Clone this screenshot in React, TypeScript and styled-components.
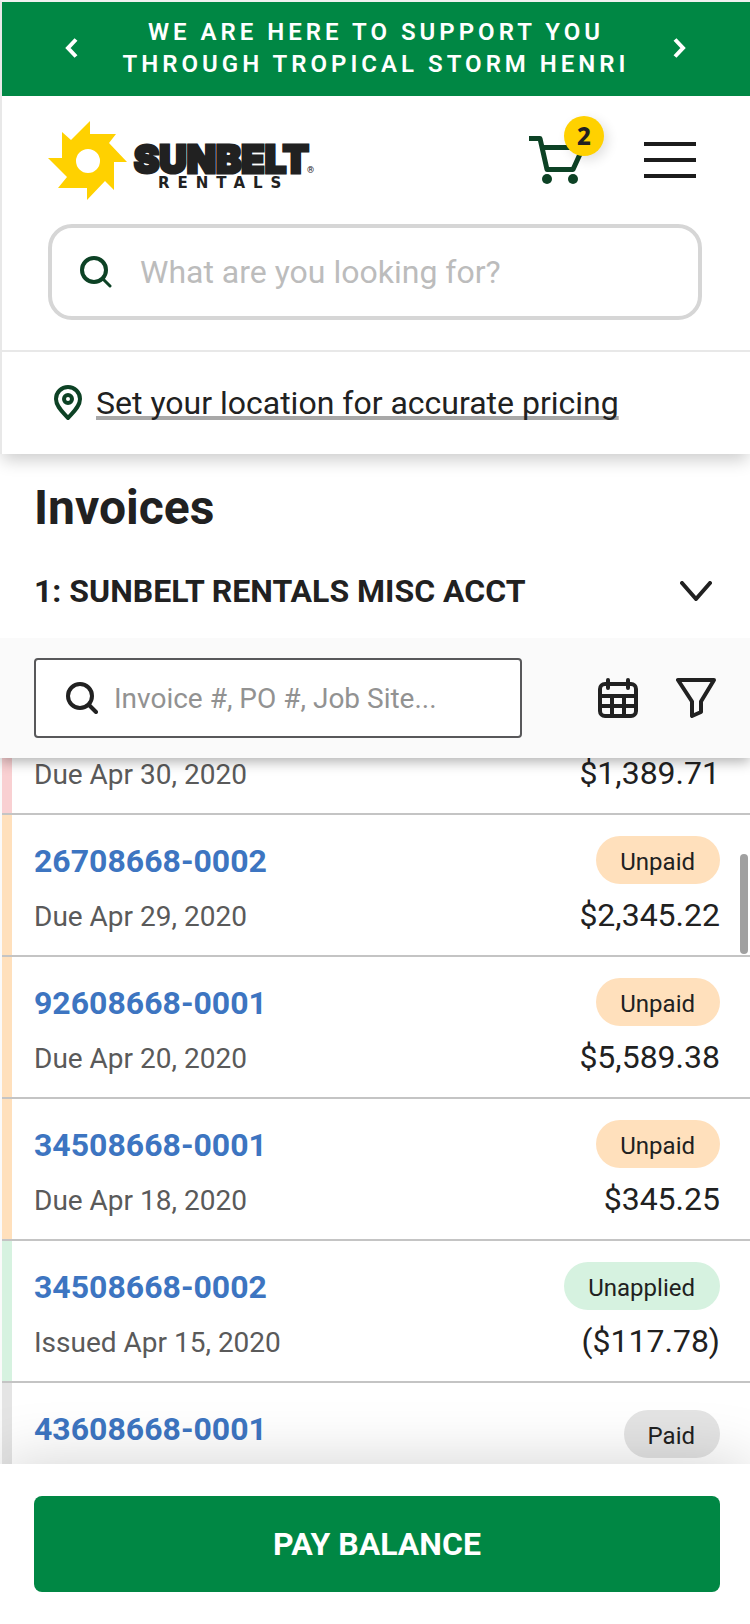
import React from "react";
import styled, { createGlobalStyle } from "styled-components";

const color = {
  green: "#008744",
  forest: "#0d4225",
  yellow: "#ffd100",
  ink: "#212121",
  muted: "#5a5a5a",
  link: "#3d75c1",
  rule: "#c4c4c4",
  edge: "#e8e8e8",
};

type Status = "overdue" | "unpaid" | "unapplied" | "paid";

const statusColor: Record<Status, string> = {
  overdue: "#f9d0d2",
  unpaid: "#ffe0bc",
  unapplied: "#d6f2e0",
  paid: "#e4e4e4",
};

interface Invoice {
  number?: string;
  label?: string;
  date?: string;
  amount?: string;
  status: Status;
}

const invoices: Invoice[] = [
  { date: "Due Apr 30, 2020", amount: "$1,389.71", status: "overdue" },
  { number: "26708668-0002", label: "Unpaid", date: "Due Apr 29, 2020", amount: "$2,345.22", status: "unpaid" },
  { number: "92608668-0001", label: "Unpaid", date: "Due Apr 20, 2020", amount: "$5,589.38", status: "unpaid" },
  { number: "34508668-0001", label: "Unpaid", date: "Due Apr 18, 2020", amount: "$345.25", status: "unpaid" },
  { number: "34508668-0002", label: "Unapplied", date: "Issued Apr 15, 2020", amount: "($117.78)", status: "unapplied" },
  { number: "43608668-0001", label: "Paid", status: "paid" },
];

const GlobalStyle = createGlobalStyle`
  * { box-sizing: border-box; }
  body {
    margin: 0;
    background: #ffffff;
    color: ${color.ink};
    font-family: Roboto, "Liberation Sans", sans-serif;
    font-size: 32px;
  }
  button, input, select {
    margin: 0;
    padding: 0;
    border: 0;
    background: none;
    color: inherit;
    font: inherit;
  }
  svg { display: block; }
`;

const Screen = styled.div`
  display: flex;
  flex-direction: column;
  height: 100vh;
  background: #ffffff;
`;

const Header = styled.header`
  position: relative;
  z-index: 2;
  flex: none;
  border-top: 2px solid #f0f0f0;
  border-left: 2px solid ${color.edge};
  background: #ffffff;
  box-shadow: 0 8px 16px -2px rgba(0, 0, 0, 0.2);
`;

const Banner = styled.div`
  display: flex;
  align-items: center;
  justify-content: space-between;
  padding: 14px 62px 16px;
  background: ${color.green};
  color: #ffffff;
`;

const BannerText = styled.p`
  margin: 0;
  font-size: 24px;
  font-weight: 600;
  line-height: 32px;
  letter-spacing: 4px;
  text-align: center;
`;

const IconButton = styled.button`
  display: block;
  flex: none;
  cursor: pointer;
`;

const BrandRow = styled.div`
  display: flex;
  align-items: center;
  height: 128px;
  padding: 0 54px 0 46px;
`;

const Brand = styled.a`
  display: flex;
  align-items: center;
  margin-right: auto;
  color: ${color.ink};
  text-decoration: none;
`;

const HeaderActions = styled.div`
  display: flex;
  align-items: center;
  gap: 56px;
`;

const CartButton = styled(IconButton)`
  position: relative;
  width: 60px;
  height: 48px;
`;

const CartCount = styled.span`
  position: absolute;
  top: -20px;
  right: -16px;
  width: 40px;
  height: 40px;
  border-radius: 50%;
  background: ${color.yellow};
  box-shadow: 4px 4px 12px rgba(0, 0, 0, 0.12);
  font-family: "Noto Sans", sans-serif;
  font-size: 24px;
  font-weight: 800;
  line-height: 40px;
  text-align: center;
`;

const SiteSearch = styled.label`
  display: flex;
  align-items: center;
  gap: 28px;
  height: 96px;
  margin: 0 48px 30px 46px;
  padding: 0 28px;
  border: 4px solid #d6d6d6;
  border-radius: 24px;
`;

const SearchInput = styled.input<{ $tone: string; $size: number }>`
  flex: 1;
  min-width: 0;
  outline: none;
  font-size: ${(p) => p.$size}px;
  &::placeholder {
    color: ${(p) => p.$tone};
    opacity: 1;
  }
`;

const LocationBar = styled.div`
  display: flex;
  align-items: center;
  gap: 14px;
  height: 104px;
  padding: 0 52px;
  border-top: 2px solid ${color.edge};
`;

const LocationLink = styled.a`
  color: inherit;
  line-height: 40px;
  text-decoration: underline 4px #a8a8a8;
  text-underline-offset: 2px;
  text-decoration-skip-ink: none;
`;

const Main = styled.main`
  display: flex;
  flex: 1;
  flex-direction: column;
  min-height: 0;
`;

const Heading = styled.section`
  flex: none;
  padding: 26px 30px 27px 34px;
`;

const Title = styled.h1`
  margin: 0 0 35px;
  font-size: 48px;
  font-weight: 700;
  line-height: 56px;
`;

const AccountPicker = styled.label`
  display: grid;
  grid-template-columns: 1fr 48px;
  align-items: center;
  line-height: 40px;
`;

const AccountSelect = styled.select`
  grid-row: 1;
  grid-column: 1 / 3;
  height: 40px;
  appearance: none;
  font-weight: 700;
`;

const PickerArrow = styled.span`
  grid-row: 1;
  grid-column: 2;
  justify-self: center;
  pointer-events: none;
`;

const FilterBar = styled.div`
  position: relative;
  z-index: 1;
  display: flex;
  flex: none;
  align-items: center;
  gap: 38px;
  padding: 20px 34px;
  background: #fafafa;
  box-shadow: 0 4px 12px rgba(0, 0, 0, 0.3);
  clip-path: inset(0 0 -24px 0);
`;

const InvoiceSearch = styled.label`
  display: flex;
  flex: 1;
  align-items: center;
  gap: 16px;
  height: 80px;
  margin-right: 38px;
  padding: 0 30px;
  border: 2px solid #58585a;
  border-radius: 4px;
  background: #ffffff;
`;

const ListArea = styled.div`
  position: relative;
  flex: 1;
  min-height: 0;
  overflow: hidden;
  border-left: 2px solid #fafafa;
`;

const List = styled.ul`
  height: 100%;
  margin: 0;
  padding: 0;
  overflow-y: auto;
  scrollbar-width: none;
  list-style: none;
`;

const Row = styled.li<{ $status: Status }>`
  display: flex;
  flex-direction: column;
  gap: 16px;
  padding: 0 30px 25px 32px;
  border-bottom: 2px solid ${color.rule};
  background: linear-gradient(${(p) => statusColor[p.$status]} 0 0) left / 10px 100% no-repeat;
`;

const RowTop = styled.div<{ $settled: boolean }>`
  display: flex;
  align-items: ${(p) => (p.$settled ? "flex-end" : "center")};
  justify-content: space-between;
  height: ${(p) => (p.$settled ? 75 : 69)}px;
  padding-top: 21px;
`;

const RowBottom = styled.div`
  display: flex;
  align-items: baseline;
  justify-content: space-between;
  height: 30px;
  line-height: 30px;
`;

const InvoiceLink = styled.a`
  align-self: flex-start;
  color: ${color.link};
  font-weight: 700;
  line-height: 50px;
  text-decoration: none;
`;

const Pill = styled.span<{ $status: Status }>`
  height: 48px;
  padding: 2px 25px 0 24px;
  border-radius: 24px;
  background: ${(p) => statusColor[p.$status]};
  font-size: 24px;
  line-height: 48px;
`;

const DateText = styled.span`
  color: ${color.muted};
  font-size: 28px;
`;

const Amount = styled.span`
  text-align: right;
`;

const ScrollThumb = styled.div`
  position: absolute;
  top: 96px;
  right: 2px;
  width: 8px;
  height: 100px;
  border-radius: 4px;
  background: #a0a0a0;
`;

const Footer = styled.footer`
  position: relative;
  z-index: 1;
  flex: none;
  padding: 32px 30px 32px 34px;
  background: #ffffff;
  box-shadow: 0 0 64px rgba(0, 0, 0, 0.18);
`;

const PayButton = styled.button`
  display: block;
  width: 100%;
  height: 96px;
  border-radius: 8px;
  background: ${color.green};
  color: #ffffff;
  font-weight: 700;
  cursor: pointer;
`;

const Chevron = ({ d }: { d: string }) => (
  <svg width="16" height="20" viewBox="0 0 16 20" fill="none" stroke="currentColor" strokeWidth="4">
    <path d={d} />
  </svg>
);

const SearchIcon = ({ stroke, tail }: { stroke: string; tail: number }) => (
  <svg width="32" height="32" viewBox="0 0 32 32" fill="none" stroke={stroke} strokeWidth="4" strokeLinecap="round">
    <circle cx="14" cy="14" r="12" />
    <path d="M23 23l7 7" strokeWidth={tail} />
  </svg>
);

const Logo = () => (
  <svg width="268" height="82" viewBox="0 0 268 82" role="img" aria-label="Sunbelt Rentals">
    <path
      fill={color.yellow}
      fillRule="evenodd"
      d="M42 2v13h26l-7 9 18 19H66v28l-9-9-18 19V69H10l9-11L0 39h14V13l9 8zM40 30a12 12 0 1 0 0 24 12 12 0 0 0 0-24z"
    />
    <g fill={color.ink}>
      <text x="86" y="54" fontFamily="Inter, sans-serif" fontWeight="900" fontSize="38" stroke={color.ink} strokeWidth="3">
        SUNBELT
      </text>
      <text x="110" y="69" fontFamily="DejaVu Sans, sans-serif" fontWeight="700" fontSize="15" letterSpacing="8">
        RENTALS
      </text>
      <text x="259" y="54" fontFamily="Roboto, sans-serif" fontSize="9">
        ®
      </text>
    </g>
  </svg>
);

const CartIcon = () => (
  <svg width="60" height="48" viewBox="0 0 60 48" fill="none" stroke={color.forest} strokeWidth="5">
    <path d="M1 2.500h11l7 31h26l10-22H14" strokeLinejoin="round" />
    <circle cx="19" cy="43" r="5" fill={color.forest} stroke="none" />
    <circle cx="45" cy="43" r="5" fill={color.forest} stroke="none" />
  </svg>
);

const MenuIcon = () => (
  <svg width="52" height="36" viewBox="0 0 52 36" fill="#1c1c1c">
    <path d="M0 0h52v4H0zM0 16h52v4H0zM0 32h52v4H0z" />
  </svg>
);

const PinIcon = () => (
  <svg width="28" height="36" viewBox="0 0 28 36" fill="none" stroke={color.forest} strokeWidth="4">
    <path d="M14 33C10 28 2 22 2 14a12 12 0 0 1 24 0c0 8-8 14-12 19z" strokeLinejoin="round" />
    <circle cx="14" cy="14" r="4" />
  </svg>
);

const CalendarIcon = () => (
  <svg width="40" height="40" viewBox="0 0 40 40" fill="none" stroke={color.ink} strokeWidth="4">
    <rect x="2" y="6" width="36" height="32" rx="5" />
    <path d="M2 18h36M2 28h36M14 18v20M26 18v20" />
    <path d="M10 2v8M30 2v8" strokeLinecap="round" />
  </svg>
);

const FunnelIcon = () => (
  <svg width="40" height="40" viewBox="0 0 40 40" fill="none" stroke={color.ink} strokeWidth="4" strokeLinejoin="round">
    <path d="M2 2h36L25 23.500V34l-9 4V23.500z" />
  </svg>
);

export default function App() {
  return (
    <Screen>
      <GlobalStyle />
      <Header>
        <Banner>
          <IconButton aria-label="Previous message">
            <Chevron d="M12 1.500L4 10l8 8.500" />
          </IconButton>
          <BannerText>
            WE ARE HERE TO SUPPORT YOU
            <br />
            THROUGH TROPICAL STORM HENRI
          </BannerText>
          <IconButton aria-label="Next message">
            <Chevron d="M3 1.500L11 10l-8 8.500" />
          </IconButton>
        </Banner>
        <BrandRow>
          <Brand href="#home">
            <Logo />
          </Brand>
          <HeaderActions>
            <CartButton aria-label="Cart, 2 items">
              <CartIcon />
              <CartCount>2</CartCount>
            </CartButton>
            <IconButton aria-label="Menu">
              <MenuIcon />
            </IconButton>
          </HeaderActions>
        </BrandRow>
        <SiteSearch>
          <SearchIcon stroke={color.forest} tail={3} />
          <SearchInput
            type="text"
            aria-label="Search the site"
            placeholder="What are you looking for?"
            $tone="#bcbcbc"
            $size={32}
          />
        </SiteSearch>
        <LocationBar>
          <PinIcon />
          <LocationLink href="#location">Set your location for accurate pricing</LocationLink>
        </LocationBar>
      </Header>
      <Main>
        <Heading>
          <Title>Invoices</Title>
          <AccountPicker>
            <AccountSelect aria-label="Account">
              <option>1: SUNBELT RENTALS MISC ACCT</option>
            </AccountSelect>
            <PickerArrow>
              <svg width="32" height="20" viewBox="0 0 32 20" fill="none" stroke={color.ink} strokeWidth="4" strokeLinecap="round" strokeLinejoin="round">
                <path d="M2 2l14 16L30 2" />
              </svg>
            </PickerArrow>
          </AccountPicker>
        </Heading>
        <FilterBar>
          <InvoiceSearch>
            <SearchIcon stroke={color.ink} tail={4} />
            <SearchInput
              type="text"
              aria-label="Search invoices"
              placeholder="Invoice #, PO #, Job Site..."
              $tone="#929292"
              $size={28}
            />
          </InvoiceSearch>
          <IconButton aria-label="Filter by date">
            <CalendarIcon />
          </IconButton>
          <IconButton aria-label="Filters">
            <FunnelIcon />
          </IconButton>
        </FilterBar>
        <ListArea>
          <List>
            {invoices.map((invoice, index) => (
              <Row key={index} $status={invoice.status}>
                {invoice.number && (
                  <RowTop $settled={invoice.status === "paid"}>
                    <InvoiceLink href={`#${invoice.number}`}>{invoice.number}</InvoiceLink>
                    <Pill $status={invoice.status}>{invoice.label}</Pill>
                  </RowTop>
                )}
                {invoice.date && (
                  <RowBottom>
                    <DateText>{invoice.date}</DateText>
                    <Amount>{invoice.amount}</Amount>
                  </RowBottom>
                )}
              </Row>
            ))}
          </List>
          <ScrollThumb />
        </ListArea>
      </Main>
      <Footer>
        <PayButton>PAY BALANCE</PayButton>
      </Footer>
    </Screen>
  );
}
